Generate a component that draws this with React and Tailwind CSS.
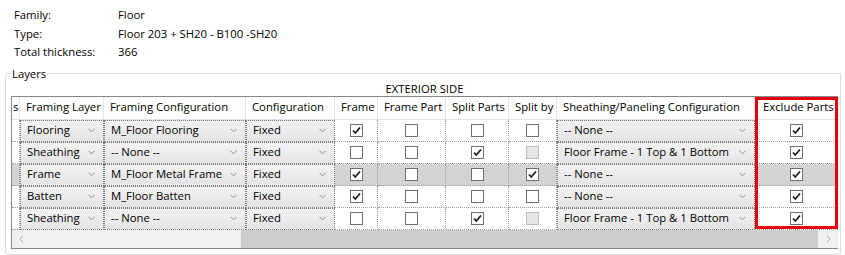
import React from "react";

const cols = "grid grid-cols-[8px_84px_142px_89px_43px_68px_63px_48px_198px_83px]";

const headers = [
  "s",
  "Framing Layer",
  "Framing Configuration",
  "Configuration",
  "Frame",
  "Frame Part",
  "Split Parts",
  "Split by",
  "Sheathing/Paneling Configuration",
  "Exclude Parts",
];

// checkbox values: true / false / "off" (disabled)
const rows = [
  { layer: "Flooring", config: "M_Floor Flooring", mode: "Fixed", frame: true, part: false, split: false, by: false, sheath: "-- None --", exclude: true },
  { layer: "Sheathing", config: "-- None --", mode: "Fixed", frame: false, part: false, split: true, by: "off", sheath: "Floor Frame - 1 Top & 1 Bottom", exclude: true },
  { layer: "Frame", config: "M_Floor Metal Frame", mode: "Fixed", frame: true, part: false, split: false, by: true, sheath: "-- None --", exclude: true, selected: true },
  { layer: "Batten", config: "M_Floor Batten", mode: "Fixed", frame: true, part: false, split: false, by: false, sheath: "-- None --", exclude: true },
  { layer: "Sheathing", config: "-- None --", mode: "Fixed", frame: false, part: false, split: true, by: "off", sheath: "Floor Frame - 1 Top & 1 Bottom", exclude: true },
];

function Chevron() {
  return (
    <svg width="7" height="5" viewBox="0 0 7 5" className="shrink-0">
      <polyline points="0.5,0.8 3.5,3.8 6.5,0.8" fill="none" stroke="#8c8c8c" strokeWidth="1" />
    </svg>
  );
}

function Dropdown({ value }) {
  return (
    <div className="h-full border border-dotted border-[#7c7c7c] bg-gradient-to-b from-[#f3f3f3] to-[#e4e4e4] flex items-center pl-[6px] pr-[8px] gap-1 overflow-hidden">
      <span className="flex-1 whitespace-nowrap overflow-hidden">{value}</span>
      <Chevron />
    </div>
  );
}

function Check({ value }) {
  if (value === "off") {
    return <div className="w-[13px] h-[13px] border border-[#bcbcbc] bg-[#e6e6e6]" />;
  }
  return (
    <div className="w-[13px] h-[13px] border border-[#6f6f6f] bg-white flex items-center justify-center">
      {value && (
        <svg width="11" height="11" viewBox="0 0 11 11">
          <polyline points="2,5.5 4.3,8 9,2.5" fill="none" stroke="#1e1e1e" strokeWidth="1.8" />
        </svg>
      )}
    </div>
  );
}

function CheckCell({ value, selected }) {
  return (
    <div className={`flex items-center justify-center border-r border-b border-dotted border-[#9c9c9c] ${selected ? "bg-[#d3d3d3]" : "bg-white"}`}>
      <Check value={value} />
    </div>
  );
}

export default function App() {
  return (
    <div className="w-[845px] h-[255px] bg-white overflow-hidden text-[11.3px] text-black font-['Open_Sans','Liberation_Sans',sans-serif]">
      {/* Type properties */}
      <div className="pt-[6px] pl-[14px] grid grid-cols-[104px_1fr] leading-[18.5px]">
        <div>Family:</div>
        <div>Floor</div>
        <div>Type:</div>
        <div>Floor 203 + SH20 - B100 -SH20</div>
        <div>Total thickness:</div>
        <div>366</div>
      </div>

      <fieldset className="ml-[5px] mt-[3px] w-[836px] h-[190px] border border-[#dcdcdc] rounded-[3px] pb-[6px]">
        <legend className="ml-[5px] px-[1px] leading-[17px]">Layers</legend>

        <div className="ml-[5px] w-[827px] text-center leading-[14px]">EXTERIOR SIDE</div>

        <div className="relative ml-[5px] w-[827px] border-l border-t border-b border-[#828790]">
          {/* header */}
          <div className={`${cols} h-[23px] border-b border-[#e2e2e2]`}>
            {headers.map((h, i) => (
              <div
                key={h}
                className={`flex items-center whitespace-nowrap overflow-hidden border-r border-[#e5e5e5] ${i === 0 ? "pl-[1px]" : i === 9 ? "pl-[8px]" : "pl-[6px]"}`}
              >
                {h}
              </div>
            ))}
          </div>

          {/* data rows */}
          {rows.map((r, i) => (
            <div key={i} className={`${cols} h-[22px]`}>
              <div className={`border-r border-b border-dotted border-[#9c9c9c] ${r.selected ? "bg-[#d3d3d3]" : "bg-white"}`} />
              <Dropdown value={r.layer} />
              <Dropdown value={r.config} />
              <Dropdown value={r.mode} />
              <CheckCell value={r.frame} selected={r.selected} />
              <CheckCell value={r.part} selected={r.selected} />
              <CheckCell value={r.split} selected={r.selected} />
              <CheckCell value={r.by} selected={r.selected} />
              <Dropdown value={r.sheath} />
              <CheckCell value={r.exclude} selected={r.selected} />
            </div>
          ))}

          {/* horizontal scrollbar */}
          <div className="h-[18px] bg-[#f0f0f0] flex items-center">
            <div className="w-[18px] flex justify-center">
              <svg width="5" height="8" viewBox="0 0 5 8">
                <polyline points="4,0.5 1,4 4,7.5" fill="none" stroke="#a6a6a6" strokeWidth="1" />
              </svg>
            </div>
            <div className="ml-[211px] w-[577px] h-full bg-[#cdcdcd]" />
            <div className="flex-1 flex justify-center">
              <svg width="5" height="8" viewBox="0 0 5 8">
                <polyline points="1,0.5 4,4 1,7.5" fill="none" stroke="#a6a6a6" strokeWidth="1" />
              </svg>
            </div>
          </div>

          {/* highlight around Exclude Parts column */}
          <div className="absolute left-[743px] top-0 w-[83px] h-[132px] border-[3px] border-[#e8000b] pointer-events-none" />
        </div>
      </fieldset>
    </div>
  );
}
